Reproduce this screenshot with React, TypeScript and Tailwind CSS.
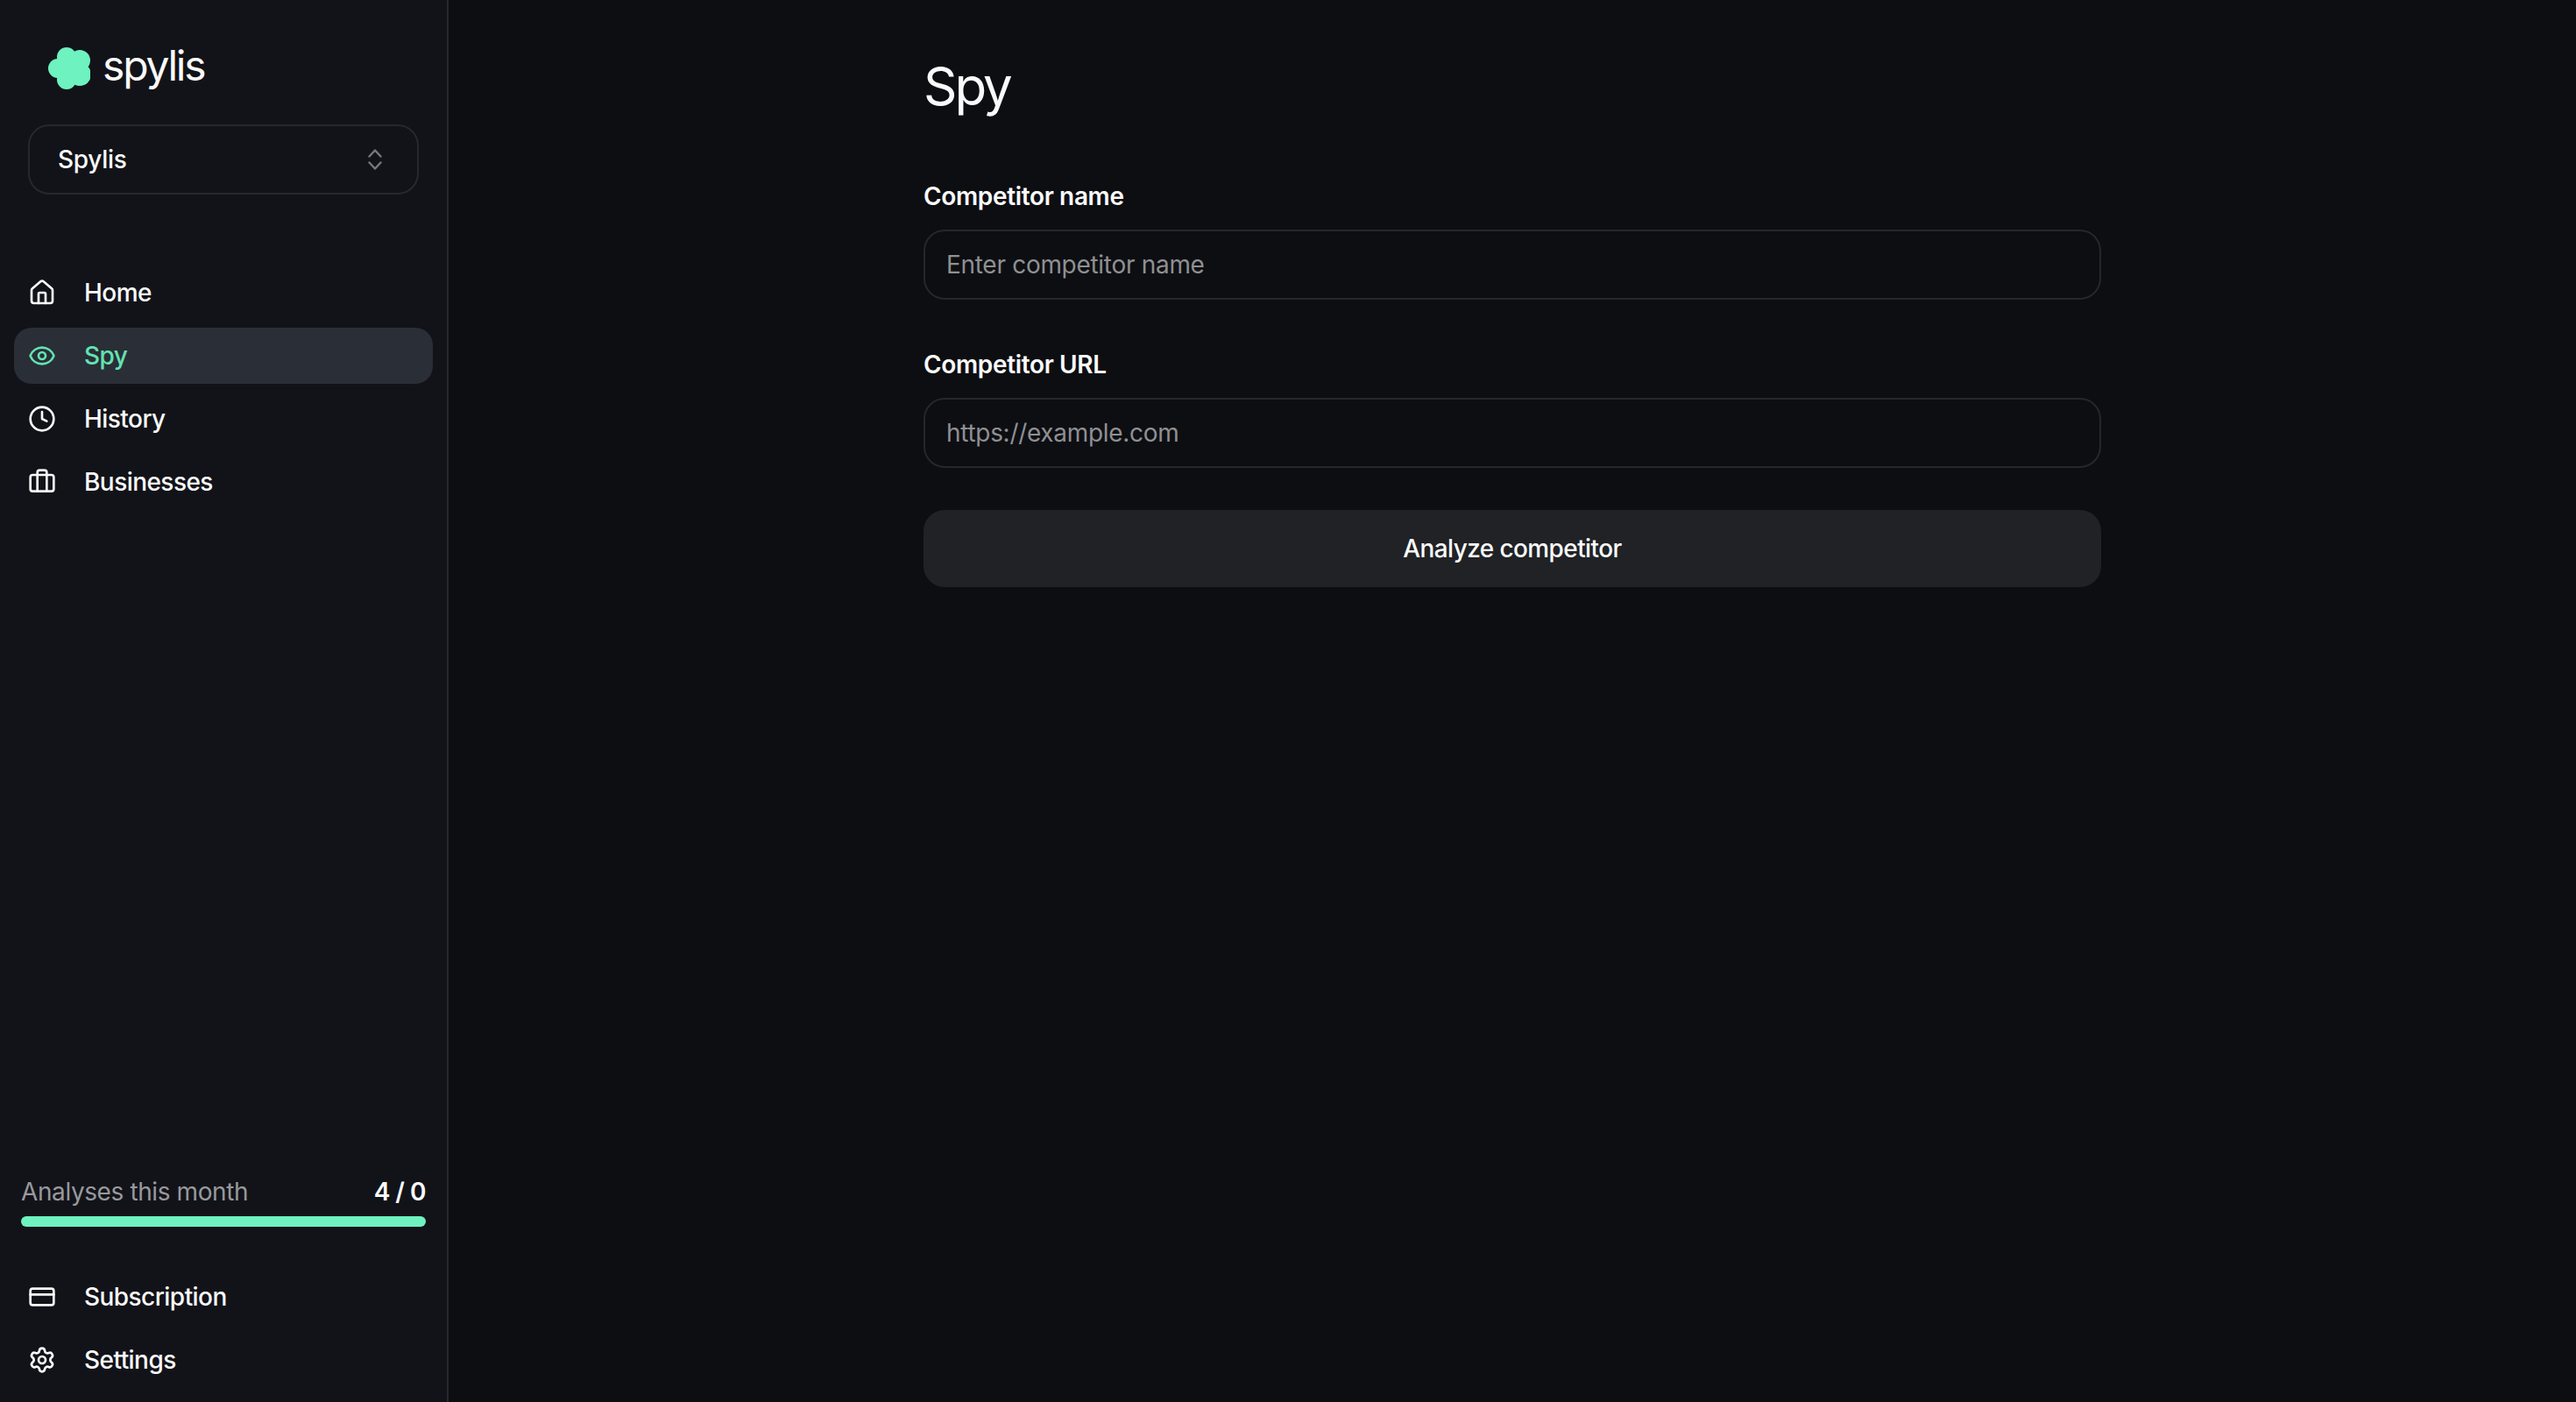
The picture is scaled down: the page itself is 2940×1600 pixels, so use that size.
import {
    Briefcase,
    Clock,
    CreditCard,
    Eye,
    House,
    Settings,
} from "lucide-react";

const topNav = [
    { label: "Home", icon: House },
    { label: "Spy", icon: Eye, active: true },
    { label: "History", icon: Clock },
    { label: "Businesses", icon: Briefcase },
];

const bottomNav = [
    { label: "Subscription", icon: CreditCard },
    { label: "Settings", icon: Settings },
];

const NavItem = ({
    label,
    icon: Icon,
    active,
}: {
    label: string;
    icon: typeof House;
    active?: boolean;
}) => (
    <a
        className={
            active
                ? "flex h-16 items-center gap-8 rounded-[20px] bg-[#2a2e37] px-4 text-[28px] font-medium tracking-[-0.55px] text-[#62e3b3]"
                : "flex h-16 items-center gap-8 rounded-[20px] px-4 text-[28px] font-medium tracking-[-0.55px] text-[#fafafa]"
        }
    >
        <Icon size={32} className="shrink-0" />
        {label}
    </a>
);

const Field = ({
    label,
    placeholder,
}: {
    label: string;
    placeholder: string;
}) => (
    <div className="flex flex-col gap-[18px]">
        <label className="text-[28px] leading-[40px] font-semibold tracking-[-0.35px] text-[#fafafa]">
            {label}
        </label>
        <input
            placeholder={placeholder}
            className="h-20 w-full rounded-[24px] border-2 border-[#25272e] bg-transparent px-6 text-[28px] tracking-[-0.3px] text-white outline-none placeholder:text-[#8f9092]"
        />
    </div>
);

const App = () => {
    return (
        <div className="flex h-[1600px] bg-[#0d0e12] font-['Inter',sans-serif]">
            <aside className="flex w-[512px] shrink-0 flex-col border-r-2 border-[#26282f] bg-[#121319] pb-4">
                <div className="flex h-[142px] items-start gap-[14px] pt-[54px] pl-[55px]">
                    <svg viewBox="0 0 48 48" className="h-12 w-12 shrink-0" fill="#6ef2c0">
                        <circle cx="21" cy="11" r="11" />
                        <circle cx="36" cy="15" r="12" />
                        <circle cx="36" cy="31" r="13" />
                        <circle cx="21" cy="37" r="11" />
                        <circle cx="11" cy="24" r="11" />
                        <circle cx="24" cy="24" r="16" />
                    </svg>
                    <span className="mt-[-9px] text-[48px] leading-[60px] tracking-[-2.2px] text-[#fafafa]">
                        spylis
                    </span>
                </div>

                <div className="mx-8 flex h-20 w-[446px] items-center justify-between rounded-[24px] border-2 border-[#26282f] pr-10 pl-8">
                    <span className="text-[28px] font-medium tracking-[-0.3px] text-[#fafafa]">
                        Spylis
                    </span>
                    <svg
                        viewBox="0 0 16 24"
                        className="h-6 w-4"
                        fill="none"
                        stroke="#77787c"
                        strokeWidth="2.4"
                        strokeLinecap="round"
                        strokeLinejoin="round"
                    >
                        <path d="M1.5 8.5 8 1.5l6.5 7" />
                        <path d="M1.5 15.5 8 22.5l6.5-7" />
                    </svg>
                </div>

                <nav className="mt-[80px] flex flex-col gap-2 px-4">
                    {topNav.map((item) => (
                        <NavItem key={item.label} {...item} />
                    ))}
                </nav>

                <div className="mt-auto px-6">
                    <div className="flex items-center justify-between text-[28px] leading-[40px]">
                        <span className="tracking-[-0.4px] text-[#98999c]">
                            Analyses this month
                        </span>
                        <span className="font-semibold tracking-[-0.5px] text-[#fafafa]">
                            4 / 0
                        </span>
                    </div>
                    <div className="mt-2 h-3 rounded-full bg-[#6ef2c0]" />
                </div>

                <nav className="mt-12 flex flex-col gap-2 px-4">
                    {bottomNav.map((item) => (
                        <NavItem key={item.label} {...item} />
                    ))}
                </nav>
            </aside>

            <main className="flex-1">
                <div className="mx-auto w-[1344px] pt-[62px]">
                    <h1 className="text-[60px] leading-[72px] tracking-[-3px] text-[#fafafa]">
                        Spy
                    </h1>
                    <div className="mt-[70px] flex flex-col gap-[54px]">
                        <Field label="Competitor name" placeholder="Enter competitor name" />
                        <Field label="Competitor URL" placeholder="https://example.com" />
                    </div>
                    <button className="mt-12 h-[88px] w-full rounded-[24px] bg-[#202226] text-[28px] font-medium tracking-[-0.6px] text-[#fafafa]">
                        Analyze competitor
                    </button>
                </div>
            </main>
        </div>
    );
};

export default App;
